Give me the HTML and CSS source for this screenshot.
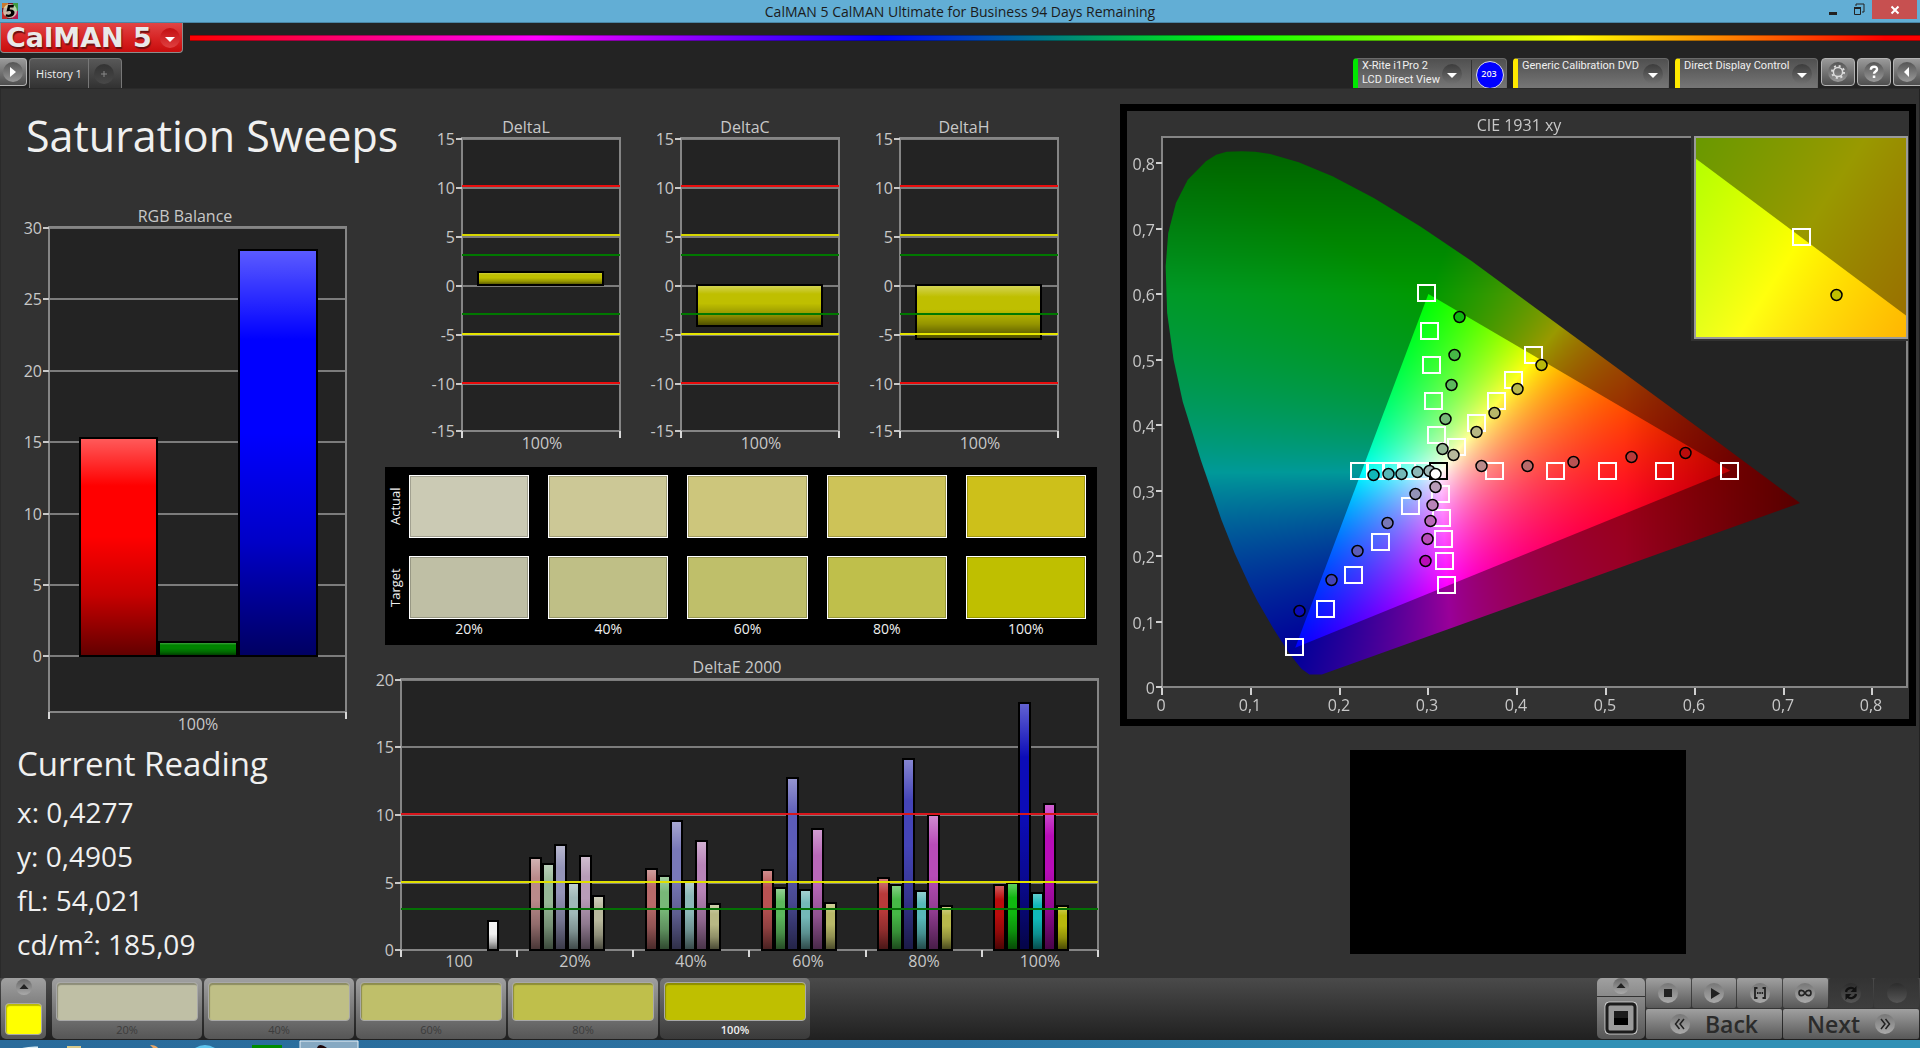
FILE: index.html
```html
<!DOCTYPE html>
<html lang="en">
<head>
<meta charset="utf-8">
<title>CalMAN 5</title>
<link rel="stylesheet" href="styles.css">
</head>
<body>
<svg class="defs" width="0" height="0" aria-hidden="true">
  <defs>
    <linearGradient id="shade" x1="0" y1="0" x2="0" y2="1">
      <stop offset="0" stop-color="#fff" stop-opacity=".36"/>
      <stop offset=".22" stop-color="#fff" stop-opacity="0"/>
      <stop offset=".45" stop-color="#000" stop-opacity="0"/>
      <stop offset=".72" stop-color="#000" stop-opacity=".22"/>
      <stop offset="1" stop-color="#000" stop-opacity=".62"/>
    </linearGradient>
  </defs>
</svg>

<header class="titlebar">
  <svg class="app-icon" viewBox="0 0 16 16">
    <rect width="16" height="16" fill="#7a1f2c"/>
    <path d="M0 0h6v5H0z" fill="#c8792e"/><path d="M11 0h5v8h-5z" fill="#3f9a45"/><path d="M10 8h6v8h-6z" fill="#b3164f"/><path d="M0 9h5v7H0z" fill="#c22a2a"/>
    <circle cx="8" cy="8" r="7" fill="#d9e8cf" opacity=".75"/>
    <path d="M12 2H6L4.500 8.500C7 7.500 9.500 7.800 9 10c-.4 1.800-2.500 2-5 1.200L3.500 13.500c4.500 1.200 8.500 0 9-3.500.3-2.600-1.800-3.800-4.800-3.500L8 4.500h3.500z" fill="#000"/>
  </svg>
  <span class="window-title">CalMAN 5 CalMAN Ultimate for Business 94 Days Remaining</span>
  <div class="window-buttons">
    <button type="button" aria-label="Minimize"><svg viewBox="0 0 14 14"><path d="M3 9h8v3H3z" fill="#222"/></svg></button>
    <button type="button" aria-label="Restore"><svg viewBox="0 0 14 14"><path d="M4 3V1h8v8h-2" fill="none" stroke="#222"/><path d="M2.500 5.500h6v6h-6z" fill="none" stroke="#222"/><path d="M2 4h7v2H2z" fill="#222"/></svg></button>
    <button type="button" class="close" aria-label="Close"><svg viewBox="0 0 14 14"><path d="M3.500 3.500l7 7M10.500 3.500l-7 7" stroke="#fff" stroke-width="2"/></svg></button>
  </div>
</header>

<div class="brandbar">
  <button type="button" class="brand"><span class="brand-name">CalMAN 5</span><span class="brand-arrow"><svg viewBox="0 0 20 20"><path d="M5 9h10l-5 5z" fill="#fff"/></svg></span></button>
  <div class="rainbow"></div>
</div>

<nav class="tabbar">
  <button type="button" class="key key-open" aria-label="Open panel"><svg viewBox="0 0 20 20"><path d="M7 5l6 5-6 5z" fill="#fff"/></svg></button>
  <div class="tabs">
    <button type="button" class="tab">History 1</button>
    <button type="button" class="tab tab-add" aria-label="Add tab"><svg viewBox="0 0 20 20"><path d="M10 7v6M7 10h6" stroke="#888"/></svg></button>
  </div>
  <div class="devices">
    <button type="button" class="device meter"><span class="device-name">X-Rite i1Pro 2<br>LCD Direct View</span><svg class="drop" viewBox="0 0 20 20"><path d="M5 9h10l-5 5z" fill="#fff"/></svg><span class="count">203</span></button>
    <button type="button" class="device source"><span class="device-name">Generic Calibration DVD</span><svg class="drop" viewBox="0 0 20 20"><path d="M5 9h10l-5 5z" fill="#fff"/></svg></button>
    <button type="button" class="device display"><span class="device-name">Direct Display Control</span><svg class="drop" viewBox="0 0 20 20"><path d="M5 9h10l-5 5z" fill="#fff"/></svg></button>
  </div>
  <div class="keys">
    <button type="button" class="key" aria-label="Settings"><svg viewBox="0 0 20 20"><circle cx="10" cy="10" r="4.600" fill="none" stroke="#ddd" stroke-width="1.500"/><circle cx="10" cy="10" r="6" fill="none" stroke="#ddd" stroke-width="2" stroke-dasharray="2 2.710"/></svg></button>
    <button type="button" class="key" aria-label="Help"><svg viewBox="0 0 20 20"><path d="M6.800 7.800C7 3.500 13.500 4 13 7.500c-.3 2-3 2-3 4.300" fill="none" stroke="#fff" stroke-width="2.400"/><path d="M8.800 13.500h2.500V16H8.800z" fill="#fff"/></svg></button>
    <button type="button" class="key key-edge" aria-label="Collapse"><svg viewBox="0 0 20 20"><path d="M12 5l-5 5 5 5z" fill="#fff"/></svg></button>
  </div>
</nav>

<main class="workspace">
  <section class="col-left">
    <h1>Saturation Sweeps</h1>
    <svg id="rgb" class="chart" viewBox="0 0 372 540" role="img" aria-label="RGB Balance"></svg>
    <div class="reading">
      <h2>Current Reading</h2>
      <p>x: 0,4277</p>
      <p>y: 0,4905</p>
      <p>fL: 54,021</p>
      <p>cd/m²: 185,09</p>
    </div>
  </section>

  <section class="col-mid">
    <div class="deltas">
      <svg id="deltaL" class="chart" viewBox="0 0 219 352" role="img" aria-label="DeltaL"></svg>
      <svg id="deltaC" class="chart" viewBox="0 0 219 352" role="img" aria-label="DeltaC"></svg>
      <svg id="deltaH" class="chart" viewBox="0 0 219 352" role="img" aria-label="DeltaH"></svg>
    </div>
    <div class="patches">
      <span class="side">Actual</span>
      <i class="patch a20"></i><i class="patch a40"></i><i class="patch a60"></i><i class="patch a80"></i><i class="patch a100"></i>
      <span class="side">Target</span>
      <i class="patch t20"></i><i class="patch t40"></i><i class="patch t60"></i><i class="patch t80"></i><i class="patch t100"></i>
      <span></span><b>20%</b><b>40%</b><b>60%</b><b>80%</b><b>100%</b>
    </div>
    <svg id="deltaE" class="chart" viewBox="0 0 732 325" role="img" aria-label="DeltaE 2000"></svg>
  </section>

  <section class="col-right">
    <div class="cie">
      <canvas id="gamut" width="782" height="608"></canvas>
      <svg id="cie" class="chart" viewBox="0 0 782 608" role="img" aria-label="CIE 1931 xy"></svg>
    </div>
    <div class="preview"></div>
  </section>
</main>

<footer class="dock">
  <button type="button" class="current" aria-label="Current color"><svg class="up" viewBox="0 0 16 16"><path d="M3.500 10h9L8 5z" fill="#222"/></svg><i class="well"></i></button>
  <div class="steps">
    <button type="button" class="step"><i class="well t20"></i>20%</button>
    <button type="button" class="step"><i class="well t40"></i>40%</button>
    <button type="button" class="step"><i class="well t60"></i>60%</button>
    <button type="button" class="step"><i class="well t80"></i>80%</button>
    <button type="button" class="step active"><i class="well t100"></i>100%</button>
  </div>
  <button type="button" class="pattern" aria-label="Pattern window"><svg class="up" viewBox="0 0 16 16"><path d="M3.500 10h9L8 5z" fill="#222"/></svg><span class="pattern-icon"><svg viewBox="0 0 34 34"><rect x="1" y="1" width="32" height="32" rx="4" fill="#8a8a8a" stroke="#c8c8c8"/><rect x="3" y="3" width="28" height="28" rx="3" fill="#9a9a9a" stroke="#1c1c1c" stroke-width="3"/><path d="M10 10h14v7H10z" fill="#1c1c1c"/><path d="M10 17h14v7H10z" fill="#000"/></svg></span></button>
  <div class="transport">
    <button type="button" aria-label="Stop"><svg viewBox="0 0 20 20"><path d="M6 6h8v8H6z" fill="#222"/></svg></button>
    <button type="button" aria-label="Play"><svg viewBox="0 0 20 20"><path d="M7 5l9 5.500L7 16z" fill="#222"/></svg></button>
    <button type="button" aria-label="Read range"><svg viewBox="0 0 20 20"><path d="M7.500 5H5v10h2.500M12.500 5H15v10h-2.500" fill="none" stroke="#222" stroke-width="1.800"/><path d="M7 9h1.500v2H7zM9.300 9h1.500v2H9.300zM11.600 9h1.500v2h-1.500z" fill="#222"/></svg></button>
    <button type="button" aria-label="Continuous"><svg viewBox="0 0 20 20"><path d="M10 10c-2-3.500-6-3.500-6 0s4 3.500 6 0 6-3.500 6 0-4 3.500-6 0z" fill="none" stroke="#222" stroke-width="1.600"/></svg></button>
    <button type="button" class="off" aria-label="Refresh"><svg viewBox="0 0 20 20"><path d="M5 9c.5-4 6-5.500 8.500-2.500M15 11c-.5 4-6 5.500-8.500 2.500" fill="none" stroke="#111" stroke-width="2.200"/><path d="M15.500 3v6h-6zM4.500 17v-6h6z" fill="#111"/></svg></button>
    <button type="button" class="off" aria-label="Record"><svg viewBox="0 0 20 20"></svg></button>
    <button type="button" class="wide"><svg viewBox="0 0 20 20"><path d="M9.500 5l-4 5 4 5M14 5l-4 5 4 5" fill="none" stroke="#222" stroke-width="1.500"/></svg>Back</button>
    <button type="button" class="wide">Next<svg viewBox="0 0 20 20"><path d="M6 5l4 5-4 5M10.500 5l4 5-4 5" fill="none" stroke="#222" stroke-width="1.500"/></svg></button>
  </div>
</footer>

<div class="taskbar">
  <svg viewBox="0 0 380 8">
    <path d="M22 8q8-2 16-1.500V8z" fill="#d8ecf5"/>
    <path d="M67 6h14v2H67z" fill="#d9c98a"/>
    <path d="M150 5q6 0 8 3h-5z" fill="#e8a868"/>
    <path d="M195 8q10-6 20 0z" fill="#5fc4ee"/>
    <path d="M252 5h30v3h-30z" fill="#008c00"/>
    <path d="M300 8V1h58v7" fill="#86a9c2" stroke="#e6f0f6"/>
    <path d="M317 8q2-6 10 0z" fill="#1c0508"/>
  </svg>
</div>
<script src="script.js"></script>
</body>
</html>
```
FILE: styles.css
```css
* { box-sizing: border-box; }
body {
  margin: 0;
  min-height: 100vh;
  display: flex;
  flex-direction: column;
  background: #232323;
  color: #f0f0f0;
  font-family: "Open Sans", "Noto Sans", sans-serif;
  overflow-x: hidden;
}
button {
  font: inherit;
  color: inherit;
  border: 0;
  padding: 0;
  margin: 0;
  background: none;
  cursor: pointer;
}
svg { display: block; }
.defs { position: absolute; }

/* title bar */
.titlebar {
  display: grid;
  grid-template-columns: 1fr auto 1fr;
  height: 23px;
  background: #62aed5;
  border-bottom: 1px solid #4a86a6;
  color: #1b1b1b;
}
.app-icon { width: 16px; height: 16px; margin: 3px 0 0 2px; }
.window-title { font-size: 14px; line-height: 24px; }
.window-buttons { display: flex; justify-content: flex-end; padding-right: 3px; }
.window-buttons button { width: 26px; height: 19px; display: grid; place-items: center; }
.window-buttons svg { width: 14px; height: 14px; }
.window-buttons .close { width: 45px; background: #c75050; }

/* brand and rainbow */
.brandbar { display: flex; height: 35px; }
.brand {
  display: flex;
  align-items: center;
  gap: 8px;
  width: 183px;
  height: 30px;
  padding-left: 5px;
  border: 1px solid #8c8c8c;
  border-top: 0;
  border-radius: 0 0 4px 4px;
  background: linear-gradient(#e04545, #d62020 60%, #c80d0d);
}
.brand-name {
  font: bold 27px/24px "DejaVu Sans", sans-serif;
  color: #e9e9e9;
  text-shadow: 1px 2px 1px #6d1010;
  white-space: nowrap;
}
.brand-arrow { width: 20px; height: 20px; border-radius: 50%; background: linear-gradient(#c30f12, #e04040); }
.rainbow {
  flex: 1;
  height: 6px;
  margin: 12px 0 0 7px;
  border-top: 1px solid #0005;
  border-bottom: 1px solid #0005;
  background: linear-gradient(90deg, #f00, #f0f 20%, #00f 40%, #0f0 60%, #ff0 80%, #f00 98%);
}

/* tab row */
.tabbar { display: flex; height: 30px; overflow: hidden; }
.key {
  width: 34px;
  height: 28px;
  display: grid;
  place-items: center;
  border: 1px solid #b4b4b4;
  border-radius: 4px;
  background: linear-gradient(#9a9a9a, #4e4e4e);
}
.key svg { width: 20px; height: 20px; border-radius: 50%; background: linear-gradient(#555, #999); }
.key-open { width: 27px; border-left: 0; border-radius: 0 4px 4px 0; }
.key-edge { width: 27px; border-right: 0; border-radius: 4px 0 0 4px; }
.tabs { display: flex; margin-left: 2px; border: 1px solid #777; border-bottom: 0; border-radius: 4px 4px 0 0; background: linear-gradient(#585858, #323232); }
.tab { width: 58px; font-size: 11px; white-space: nowrap; }
.tab-add { width: 33px; padding-right: 3px; border-left: 1px solid #777; display: grid; place-items: center; }
.tab-add svg { width: 20px; height: 20px; border-radius: 50%; background: linear-gradient(#333, #484848); }
.devices { display: flex; gap: 6px; margin-left: auto; }
.device {
  display: flex;
  align-items: center;
  height: 30px;
  border: 1px solid #6a6a6a;
  border-bottom: 0;
  border-left: 5px solid #ffe900;
  border-radius: 4px 4px 0 0;
  background: linear-gradient(#505050, #767676);
  text-align: left;
}
.device-name { flex: 1; align-self: flex-start; padding-left: 4px; font: 11px/14px Roboto, sans-serif; white-space: nowrap; }
.drop { flex: none; width: 20px; height: 20px; margin-right: 5px; border-radius: 50%; background: linear-gradient(#3c3c3c, #707070); }
.meter { width: 154px; border-left-color: #00e800; }
.source { width: 156px; }
.display { width: 143px; }
.meter .drop { margin-right: 9px; }
.count {
  flex: none;
  width: 35px;
  height: 28px;
  border-left: 1px solid #333;
  display: grid;
  place-items: center;
  position: relative;
  z-index: 0;
  font-size: 9px;
  font-weight: 600;
}
.count::before { content: ""; position: absolute; z-index: -1; left: 4px; top: 1px; width: 26px; height: 26px; border: 1px solid #ddd; border-radius: 50%; background: #00f; }
.keys { display: flex; gap: 2px; margin-left: 3px; }

/* workspace */
.workspace {
  flex: 1;
  display: grid;
  grid-template-columns: 372fr 732fr 816fr;
  align-items: start;
  background: #323232;
  box-shadow: inset 1px 1px #2a2a2a, inset -1px 0 #222;
}
.workspace > * { min-width: 0; }
.chart { width: 100%; height: auto; overflow: visible; }
.chart text { font-size: 16px; fill: #c8c8c8; }
h1 { margin: 0; padding: 20px 0 36px 26px; font-size: 43px; line-height: 56px; font-weight: 400; white-space: nowrap; }
.reading { padding: 2px 0 0 17px; }
h2 { margin: 0 0 4px; font-size: 33px; line-height: 44px; font-weight: 400; }
.reading p { margin: 0; font-size: 28px; line-height: 44px; }

.deltas { display: grid; grid-template-columns: repeat(3, 1fr); padding: 20px 24px 0 51px; }
.patches {
  display: grid;
  grid-template-columns: 24px repeat(5, 1fr);
  grid-template-rows: 63px 63px 26px;
  row-gap: 18px;
  margin: 7px 7px 5px 13px;
  padding: 8px 0 0;
  height: 178px;
  background: #000;
  font-size: 14px;
}
.patches { column-gap: 19px; padding-right: 11px; grid-template-columns: 5px repeat(5, 1fr); }
.side { width: 20px; writing-mode: vertical-rl; transform: rotate(180deg); text-align: center; font-size: 13px; line-height: 20px; }
.patch { border: 1px solid #fff; box-shadow: inset 0 0 0 1px #0003; }
.patches b { margin-top: -20px; font-weight: 400; text-align: center; line-height: 24px; }
.a20 { background: #cbcab4; } .a40 { background: #ccc896; } .a60 { background: #cdc67c; } .a80 { background: #cdc358; } .a100 { background: #cdc01a; }
.t20 { background: #bfbfa5; } .t40 { background: #bfbf86; } .t60 { background: #bfbf6a; } .t80 { background: #bfbf4b; } .t100 { background: #bfbf00; }

.col-right { padding: 16px 4px 0 16px; }
.cie { display: grid; border: 7px solid #000; }
.cie > * { grid-area: 1 / 1; width: 100%; }
.preview { width: 336px; height: 204px; margin: 24px auto 0; background: #000; }

/* dock */
.dock { display: flex; height: 62px; padding-left: 1px; background: linear-gradient(#4a4a4a, #202020); }
.dock > button, .step { border-radius: 5px; background: linear-gradient(#a0a0a0, #565656); }
.up { width: 16px; height: 16px; border-radius: 50%; background: linear-gradient(#666, #aaa); }
.well { display: block; border: 1px solid #a8a8a8; border-radius: 4px; box-shadow: inset 1px 2px 1px #0004; }
.current { width: 45px; height: 61px; display: flex; flex-direction: column; align-items: center; gap: 8px; padding-top: 1px; }
.current .well { width: 37px; height: 32px; background: #ff0; }
.steps { display: flex; gap: 2px; margin-left: 6px; }
.step { width: 150px; height: 61px; padding: 4px 4px 0; font-size: 11px; line-height: 18px; color: #3c3c3c; }
.step .well { height: 39px; }
.step.active { background: linear-gradient(#777, #3a3a3a); color: #f0f0f0; font-weight: 600; }
.pattern { width: 48px; height: 61px; margin-left: auto; display: flex; flex-direction: column; align-items: center; border: 0; }
.pattern-icon { align-self: stretch; flex: 1; margin-top: 2px; border-top: 1px solid #333; display: grid; place-items: center; }
.pattern-icon svg { width: 34px; height: 34px; }
.transport { display: grid; grid-template-columns: repeat(6, 1fr); grid-template-rows: 30px 30px; gap: 1px; width: 273px; margin: 0 1px; }
.transport button { display: flex; align-items: center; justify-content: center; border-radius: 2px; background: linear-gradient(#a0a0a0, #585858); color: #2b2b2b; }
.transport svg { width: 20px; height: 20px; border-radius: 50%; background: linear-gradient(#777, #aaa); }
.transport .off { background: linear-gradient(#333, #3e3e3e); }
.transport .off svg { background: linear-gradient(#2c2c2c, #565656); }
.transport .wide { grid-column: span 3; gap: 15px; font-size: 23px; line-height: 28px; font-weight: 600; }

.taskbar { height: 8px; background: linear-gradient(90deg, #2a6b9b, #2b73a2 50%, #3190b5 80%); }
.taskbar svg { width: 380px; height: 8px; }
```
FILE: script.js
```js
const NS = 'http://www.w3.org/2000/svg';

function add(svg, name, attrs, text) {
  const el = document.createElementNS(NS, name);
  for (const key in attrs) el.setAttribute(key, attrs[key]);
  if (text !== undefined) el.textContent = text;
  svg.appendChild(el);
}
function line(svg, x1, y1, x2, y2, stroke, width) {
  add(svg, 'line', { x1, y1, x2, y2, stroke, 'stroke-width': width });
}
function label(svg, x, y, text, anchor) {
  add(svg, 'text', { x, y, 'text-anchor': anchor || 'middle' }, text);
}
function bar(svg, x, y, width, height, fill) {
  add(svg, 'rect', { x, y, width, height, fill });
  add(svg, 'rect', { x, y, width, height, fill: 'url(#shade)', stroke: '#000', 'stroke-width': 2 });
}

/* c: left, right, top, bottom, ticks [[y, label]], cols [x], bars, limits */
function chart(id, c) {
  const svg = document.getElementById(id);
  add(svg, 'rect', { x: c.left, y: c.top, width: c.right - c.left, height: c.bottom - c.top, fill: '#232323' });
  for (const [y] of c.ticks) line(svg, c.left, y, c.right, y, '#7c7c7c', 2);
  add(svg, 'rect', { x: c.left, y: c.top, width: c.right - c.left, height: c.bottom - c.top, fill: 'none', stroke: '#858585', 'stroke-width': 2 });
  for (const b of c.bars) bar(svg, ...b);
  for (const [y, color] of c.limits || []) line(svg, c.left, y, c.right, y, color, 2);
  for (const [y, text] of c.ticks) {
    line(svg, c.left - 6, y, c.left, y, '#c8c8c8', 2);
    label(svg, c.left - 7, y + 6, text, 'end');
  }
  for (const x of c.cols) line(svg, x, c.bottom, x, c.bottom + 7, '#d8d8d8', 2);
  for (const [x, y, text] of c.labels) label(svg, x, y, text);
}

chart('rgb', {
  left: 49, right: 346, top: 27, bottom: 512,
  ticks: [[28, '30'], [99, '25'], [171, '20'], [242, '15'], [314, '10'], [385, '5'], [456, '0']],
  cols: [49, 346],
  bars: [[80, 238, 77, 218, '#f00'], [159, 442, 78, 14, '#008400'], [239, 50, 78, 406, '#00f']],
  labels: [[185, 22, 'RGB Balance'], [198, 530, '100%']]
});

const limits = [[78, '#e80d0d'], [127, '#d5d500'], [147, '#007800'], [206, '#007800'], [226, '#e5e500'], [275, '#e80d0d']];
const deltas = { L: [164, 13], C: [177, 41], H: [177, 54] };
for (const name in deltas) {
  chart('delta' + name, {
    left: 39, right: 197, top: 30, bottom: 323,
    ticks: [[31, '15'], [80, '10'], [129, '5'], [178, '0'], [227, '-5'], [276, '-10'], [323, '-15']],
    cols: [39, 197],
    bars: [[55, deltas[name][0], 125, deltas[name][1], '#bfbf00']],
    limits,
    labels: [[103, 25, 'Delta' + name], [119, 341, '100%']]
  });
}

const hues = [
  ['#ba8a8a', '#96b896', '#9494b8', '#a0b8b8', '#b89cb8', '#b8b89c'],
  ['#b86a6a', '#78b878', '#7878b8', '#8cb8b8', '#b884b8', '#b8b884'],
  ['#b85252', '#5cb85c', '#5c5cb8', '#74b8b8', '#b868b8', '#b8b868'],
  ['#b83a3a', '#46b846', '#4444b8', '#58b8b8', '#b84cb8', '#b8b84c'],
  ['#ba0c0c', '#10b810', '#0c0cb8', '#10b8b8', '#b80cb8', '#b8b80c']
];
const tops = [
  [208, 214, 195, 233, 206, 246],
  [219, 226, 171, 231, 191, 254],
  [220, 238, 128, 240, 179, 253],
  [228, 235, 109, 241, 165, 256],
  [235, 233, 53, 243, 154, 256]
];
const bars = [[116, 271, 10, 29, '#f0f0f0']];
tops.forEach((group, g) => group.forEach((y, i) => {
  bars.push([158 + g * 116 + Math.round(i * 12.6), y, 11, 300 - y, hues[g][i]]);
}));
chart('deltaE', {
  left: 29, right: 726, top: 29, bottom: 300,
  ticks: [[30, '20'], [97, '15'], [165, '10'], [233, '5'], [300, '0']],
  cols: [29, 145, 261, 377, 494, 610, 726],
  bars,
  limits: [[164, '#d8161c'], [232, '#e0e000'], [259, '#047004']],
  labels: [[365, 23, 'DeltaE 2000'], [87, 317, '100'], [203, 317, '20%'], [319, 317, '40%'], [436, 317, '60%'], [552, 317, '80%'], [668, 317, '100%']]
});

/* chromaticity diagram */
const locus = [
  [.7185, .281], [.18, .019], [.166, .019], [.157, .028], [.148, .043], [.1425, .053], [.125, .09], [.1076, .131], [.099, .154],
  [.082, .204], [.067, .255], [.0436, .347], [.0233, .436], [.013, .5], [.0058, .571], [.0041, .642], [.007, .693], [.0157, .739],
  [.029, .7745], [.0495, .8025], [.061, .8127], [.0727, .8173], [.09, .818], [.105, .8173], [.122, .8137], [.154, .801], [.192, .7796],
  [.2385, .7465], [.291, .703], [.349, .65], [.6225, .3776]
];
const gamut = [[.64, .33], [.3, .6], [.15, .06]];

/* linear RGB, scaled so the strongest channel is full */
function color(x, y, dim) {
  const yy = Math.max(y, .001), X = x / yy, Z = (1 - x - yy) / yy;
  let rgb = [3.2406 * X - 1.5372 - .4986 * Z, -.9689 * X + 1.8758 + .0415 * Z, .0557 * X - .2040 + 1.0570 * Z];
  rgb = rgb.map(v => Math.max(v, 0));
  const max = Math.max(...rgb);
  let k = dim ? .6 : 1;
  if (x > .52) k *= 1 - Math.min((x - .52) * 2.2, .42);
  if (y > .6) k *= 1 - (y - .6) * 1.6;
  return rgb.map(v => 255 * k * v / max);
}

function layer(ctx, box, toXY, fromXY, shape, dim) {
  const [bx, by, w, h] = box;
  const tile = document.createElement('canvas');
  tile.width = w;
  tile.height = h;
  const tctx = tile.getContext('2d');
  const img = tctx.createImageData(w, h);
  for (let j = 0, p = 0; j < h; j++) {
    for (let i = 0; i < w; i++) {
      const c = color(...toXY(bx + i, by + j), dim);
      img.data[p++] = c[0];
      img.data[p++] = c[1];
      img.data[p++] = c[2];
      img.data[p++] = 255;
    }
  }
  tctx.putImageData(img, 0, 0);
  ctx.save();
  ctx.beginPath();
  ctx.rect(bx, by, w, h);
  ctx.clip();
  ctx.beginPath();
  shape.forEach(pt => ctx.lineTo(...fromXY(...pt)));
  ctx.closePath();
  ctx.clip();
  ctx.drawImage(tile, bx, by);
  ctx.restore();
}

const ctx = document.getElementById('gamut').getContext('2d');
ctx.fillStyle = '#232323';
ctx.fillRect(35, 26, 745, 550);
const plot = [35, 26, 745, 550];
const toXY = (px, py) => [(px - 35) / 888, (576 - py) / 655];
const fromXY = (x, y) => [35 + x * 888, 576 - y * 655];
layer(ctx, plot, toXY, fromXY, locus, true);
layer(ctx, plot, toXY, fromXY, gamut, false);
ctx.fillStyle = '#323232';
ctx.fillRect(564, 24, 218, 206);
const inset = [568, 25, 213, 202];
const zoomTo = (px, py) => [.4193 + (px - 674) / 4166, .5053 - (py - 126) / 3919];
const zoomFrom = (x, y) => [674 + (x - .4193) * 4166, 126 + (.5053 - y) * 3919];
layer(ctx, inset, zoomTo, zoomFrom, locus, true);
layer(ctx, inset, zoomTo, zoomFrom, gamut, false);

const cie = document.getElementById('cie');
add(cie, 'path', { d: 'M564 26H35V576H780V230', fill: 'none', stroke: '#858585', 'stroke-width': 2 });
add(cie, 'rect', { x: 568, y: 26, width: 212, height: 201, fill: 'none', stroke: '#9a9a9a', 'stroke-width': 2 });
label(cie, 392, 20, 'CIE 1931 xy');
for (let i = 0; i <= 8; i++) {
  const [x, y] = fromXY(i / 10, i / 10).map(Math.round);
  const text = i ? '0,' + i : '0';
  line(cie, x, 577, x, 584, '#d0d0d0', 2);
  label(cie, x - 1, 600, text);
  line(cie, 29, y, 35, y, '#d0d0d0', 2);
  label(cie, 28, y + 7, text, 'end');
}
function square(x, y, stroke) {
  add(cie, 'rect', { x: x - 9, y: y - 8, width: 17, height: 16, fill: 'none', stroke, 'stroke-width': 2 });
}
function dot(x, y, fill) {
  add(cie, 'circle', { cx: x + .5, cy: y, r: 5.5, fill, stroke: '#000', 'stroke-width': 1.5 });
}
const targets = [
  [300, 182], [303, 220], [305, 254], [307, 290], [310, 324],
  [407, 244], [387, 269], [370, 290], [350, 312], [330, 336],
  [368, 360], [429, 360], [481, 360], [538, 360], [603, 360],
  [233, 360], [249, 360], [265, 360], [280, 360], [297, 360],
  [314, 383], [315, 407], [317, 428], [318, 450], [320, 474],
  [284, 395], [254, 431], [227, 464], [199, 498], [168, 536]
];
targets.forEach(([x, y]) => square(x, y, '#fff'));
square(312, 360, '#000');
const readings = [
  [[354, 355], [400, 355], [446, 351], [504, 346], [558, 342]],
  [[315, 338], [318, 308], [324, 274], [327, 244], [332, 206]],
  [[288, 383], [260, 412], [230, 440], [204, 469], [172, 500]],
  [[302, 360], [290, 361], [274, 363], [261, 363], [246, 364]],
  [[308, 376], [305, 394], [303, 410], [300, 428], [298, 450]],
  [[326, 344], [349, 321], [367, 302], [390, 278], [414, 254]]
];
readings.forEach((row, h) => row.forEach(([x, y], s) => dot(x, y, hues[s][h])));
dot(308, 363, '#fff');
square(675, 126, '#fff');
dot(709, 184, '#bfbf00');
```
